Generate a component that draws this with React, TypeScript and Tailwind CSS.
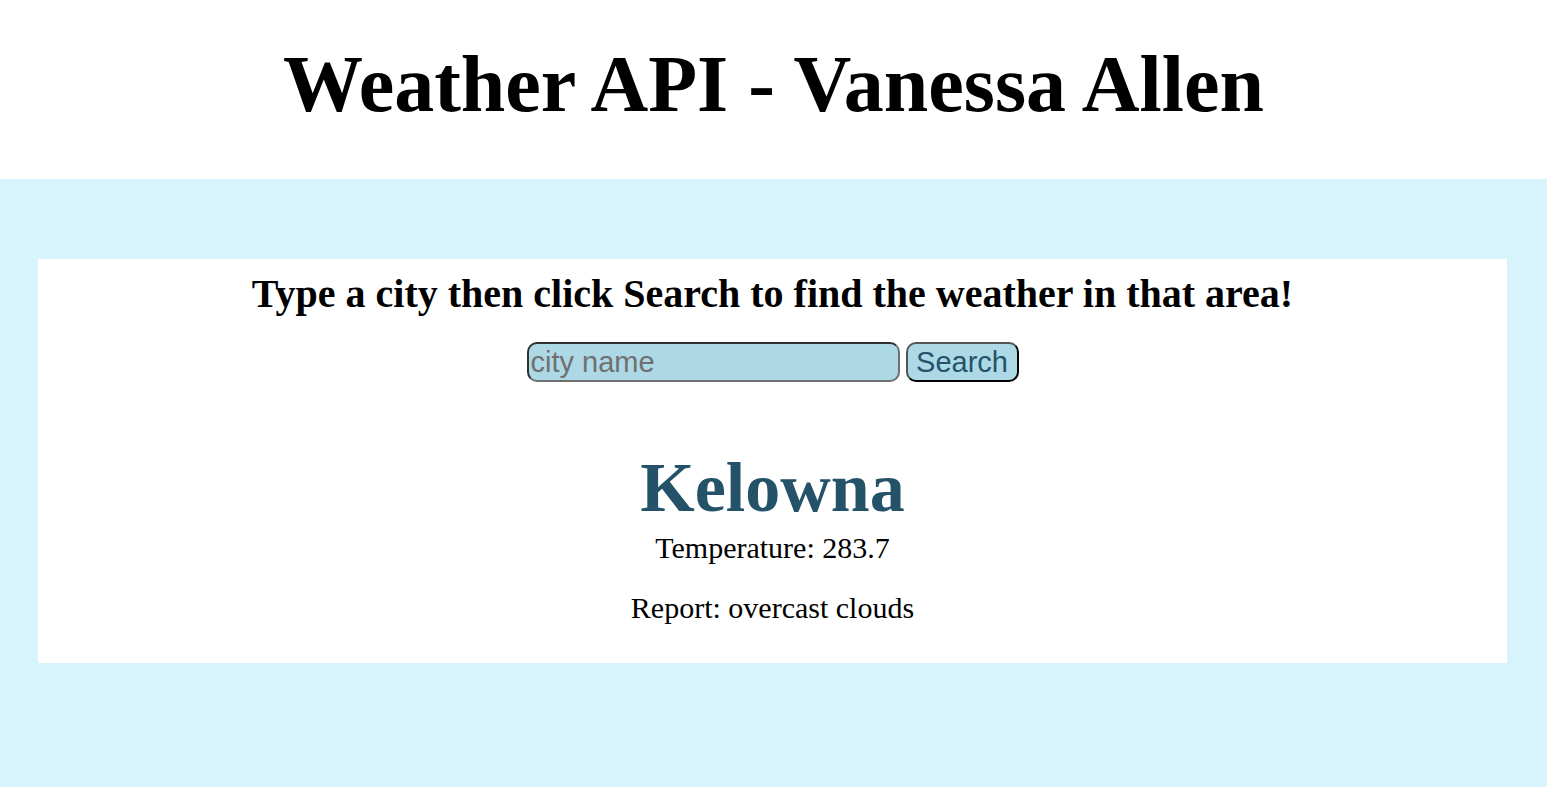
export default function App() {
  return (
    <div className="min-h-screen bg-white font-['Liberation_Serif',serif] text-black">
      {/* Header */}
      <header className="h-[179px] flex items-center justify-center">
        <h1 className="text-[80px] font-bold leading-none pb-[12px]">Weather API - Vanessa Allen</h1>
      </header>

      {/* Main band */}
      <main className="bg-[#d7f4fd] pl-[38px] pr-[40px] pt-[80px] pb-[124px]">
        <section className="bg-white h-[404px] flex flex-col items-center pt-[15px]">
          <h2 className="text-[40px] font-bold leading-[40px]">
            Type a city then click Search to find the weather in that area!
          </h2>

          <form className="mt-[28px] flex items-center gap-[6px]" onSubmit={(e) => e.preventDefault()}>
            <input
              type="text"
              placeholder="city name"
              className="w-[373px] h-[40px] rounded-[10px] border-2 border-[#2f2f2f] border-b-[#6f6f6f] border-r-[#6f6f6f] bg-[#add8e6] px-[2px] font-['Liberation_Sans',sans-serif] text-[29px] leading-none text-[#245369] placeholder:text-[#707070] outline-none"
            />
            <button
              type="submit"
              className="w-[113px] h-[40px] rounded-[10px] border-2 border-[#555] border-b-black border-r-black bg-[#add8e6] font-['Liberation_Sans',sans-serif] text-[29px] leading-none text-[#245369]"
            >
              Search
            </button>
          </form>

          <h3 className="mt-[66px] text-[70px] font-bold leading-[80px] text-[#245369]">Kelowna</h3>
          <p className="mt-[3px] text-[30px] leading-[34px]">Temperature: 283.7</p>
          <p className="mt-[26px] text-[30px] leading-[34px]">Report: overcast clouds</p>
        </section>
      </main>
    </div>
  );
}
